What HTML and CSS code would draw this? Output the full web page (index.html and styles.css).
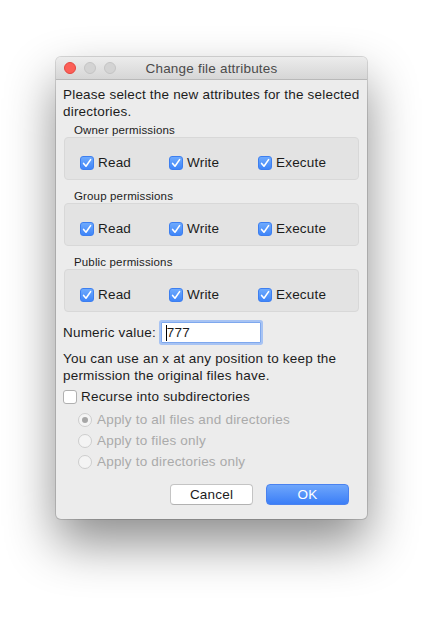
FILE: index.html
```html
<!DOCTYPE html>
<html>
<head>
<meta charset="utf-8">
<link rel="stylesheet" href="styles.css">
</head>
<body>
<div class="window">
  <div class="titlebar">
    <div class="lights">
      <span class="light red"></span>
      <span class="light grey"></span>
      <span class="light grey"></span>
    </div>
    <div class="title">Change file attributes</div>
    <div></div>
  </div>
  <div class="content">
    <p class="intro">Please select the new attributes for the selected directories.</p>

    <div class="group-label">Owner permissions</div>
    <div class="group">
      <label class="check"><span class="cb on"><svg viewBox="0 0 14 14"><path d="M3.6 7.4 L6 10.2 L10.6 3.6"/></svg></span>Read</label>
      <label class="check"><span class="cb on"><svg viewBox="0 0 14 14"><path d="M3.6 7.4 L6 10.2 L10.6 3.6"/></svg></span>Write</label>
      <label class="check"><span class="cb on"><svg viewBox="0 0 14 14"><path d="M3.6 7.4 L6 10.2 L10.6 3.6"/></svg></span>Execute</label>
    </div>

    <div class="group-label">Group permissions</div>
    <div class="group">
      <label class="check"><span class="cb on"><svg viewBox="0 0 14 14"><path d="M3.6 7.4 L6 10.2 L10.6 3.6"/></svg></span>Read</label>
      <label class="check"><span class="cb on"><svg viewBox="0 0 14 14"><path d="M3.6 7.4 L6 10.2 L10.6 3.6"/></svg></span>Write</label>
      <label class="check"><span class="cb on"><svg viewBox="0 0 14 14"><path d="M3.6 7.4 L6 10.2 L10.6 3.6"/></svg></span>Execute</label>
    </div>

    <div class="group-label">Public permissions</div>
    <div class="group">
      <label class="check"><span class="cb on"><svg viewBox="0 0 14 14"><path d="M3.6 7.4 L6 10.2 L10.6 3.6"/></svg></span>Read</label>
      <label class="check"><span class="cb on"><svg viewBox="0 0 14 14"><path d="M3.6 7.4 L6 10.2 L10.6 3.6"/></svg></span>Write</label>
      <label class="check"><span class="cb on"><svg viewBox="0 0 14 14"><path d="M3.6 7.4 L6 10.2 L10.6 3.6"/></svg></span>Execute</label>
    </div>

    <div class="numeric">
      <span>Numeric value:</span>
      <div class="field"><span class="caret"></span>777</div>
    </div>

    <p class="hint">You can use an x at any position to keep the permission the original files have.</p>

    <label class="check recurse"><span class="cb off"></span>Recurse into subdirectories</label>

    <div class="radios">
      <div class="radio"><span class="rb sel"></span>Apply to all files and directories</div>
      <div class="radio"><span class="rb"></span>Apply to files only</div>
      <div class="radio"><span class="rb"></span>Apply to directories only</div>
    </div>

    <div class="buttons">
      <button class="btn cancel">Cancel</button>
      <button class="btn ok">OK</button>
    </div>
  </div>
</div>
</body>
</html>
```

FILE: styles.css
```css
html, body {
  margin: 0;
  padding: 0;
  background: #ffffff;
}
body {
  font-family: "Liberation Sans", Arial, sans-serif;
  color: #1c1c1c;
  padding: 57px 0 0 56px;
  width: 444px;
  height: 618px;
  box-sizing: border-box;
  overflow: hidden;
}
.window {
  width: 311px;
  height: 462px;
  border-radius: 5px;
  background: #ececec;
  box-shadow: 0 24px 50px rgba(0, 0, 0, 0.45), 0 0 0 1px rgba(0, 0, 0, 0.14);
  overflow: hidden;
  display: flex;
  flex-direction: column;
}
.titlebar {
  height: 22px;
  flex: none;
  background: linear-gradient(#ececec, #d6d6d6);
  border-bottom: 1px solid #b9b9b9;
  display: grid;
  grid-template-columns: 1fr auto 1fr;
  align-items: center;
}
.lights {
  display: flex;
  gap: 8px;
  padding-left: 8px;
}
.light {
  width: 12px;
  height: 12px;
  border-radius: 50%;
  box-sizing: border-box;
}
.light.red {
  background: #fc5f57;
  border: 1px solid #e2463f;
}
.light.grey {
  background: #d3d3d3;
  border: 1px solid #c4c4c4;
}
.title {
  font-size: 13.5px;
  letter-spacing: 0.2px;
  color: #4b4b4b;
}
.content {
  padding: 6px 8px 0 7px;
  font-size: 13.5px;
  letter-spacing: 0.2px;
  display: flex;
  flex-direction: column;
  flex: 1;
}
.intro, .hint {
  margin: 0;
  line-height: 17px;
}
.intro {
  margin-right: -8px;
}
.group-label {
  font-size: 11.5px;
  letter-spacing: 0.15px;
  line-height: 14px;
  margin-top: 3px;
  padding-left: 11px;
}
.group + .group-label {
  margin-top: 9px;
}
.group {
  margin-left: 1px;
  height: 43px;
  box-sizing: border-box;
  background: #e3e3e3;
  border: 1px solid #d8d8d8;
  border-radius: 4px;
  display: grid;
  grid-template-columns: 89px 89px 1fr;
  align-items: center;
  padding: 8px 0 0 15px;
}
.check {
  display: flex;
  align-items: center;
  gap: 4px;
  line-height: 16px;
}
.cb {
  width: 14px;
  height: 14px;
  border-radius: 3px;
  box-sizing: border-box;
  flex: none;
  display: flex;
  align-items: center;
  justify-content: center;
}
.cb.on {
  background: linear-gradient(#6eaafd, #3f85f8);
  border: 1px solid #3d7ff0;
}
.cb svg {
  width: 14px;
  height: 14px;
  flex: none;
  margin: -1px;
}
.cb path {
  fill: none;
  stroke: #ffffff;
  stroke-width: 1.6;
  stroke-linecap: round;
  stroke-linejoin: round;
}
.cb.off {
  background: #ffffff;
  border: 1px solid #b0b0b0;
}
.numeric {
  display: flex;
  align-items: center;
  gap: 5px;
  margin-top: 10px;
}
.field {
  width: 100px;
  height: 21px;
  box-sizing: border-box;
  background: #ffffff;
  border: 1px solid #7ea8ee;
  box-shadow: 0 0 0 2px #a7c3f3;
  border-radius: 1px;
  line-height: 18px;
  padding-left: 4px;
  display: flex;
  align-items: center;
}
.caret {
  width: 1px;
  height: 16px;
  background: #000000;
}
.hint {
  margin-top: 7px;
}
.recurse {
  margin-top: 5px;
  gap: 4px;
}
.radios {
  display: flex;
  flex-direction: column;
  gap: 5px;
  margin-top: 7px;
  padding-left: 15px;
}
.radio {
  display: flex;
  align-items: center;
  gap: 5px;
  line-height: 16px;
  color: #aaaaaa;
}
.rb {
  width: 14px;
  height: 14px;
  border-radius: 50%;
  box-sizing: border-box;
  background: #f4f4f4;
  border: 1px solid #cdcdcd;
  display: flex;
  align-items: center;
  justify-content: center;
}
.rb.sel::after {
  content: "";
  width: 6px;
  height: 6px;
  border-radius: 50%;
  background: #a6a6a6;
}
.buttons {
  display: flex;
  justify-content: flex-end;
  gap: 13px;
  margin-top: 14px;
  padding-right: 10px;
}
.btn {
  width: 83px;
  height: 21px;
  font-family: "Liberation Sans", Arial, sans-serif;
  font-size: 13.5px;
  letter-spacing: 0.2px;
  border-radius: 4px;
  padding: 0;
  box-sizing: border-box;
}
.cancel {
  background: #ffffff;
  border: 1px solid #c4c4c4;
  border-bottom-color: #b2b2b2;
  color: #1c1c1c;
}
.ok {
  background: linear-gradient(#6ea6fb, #3b7ef7);
  border: 1px solid #4a82ef;
  color: #ffffff;
}
```
